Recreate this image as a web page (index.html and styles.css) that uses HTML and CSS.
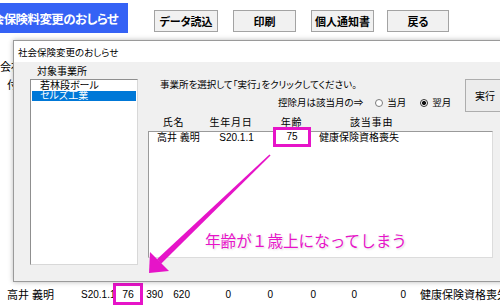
FILE: index.html
```html
<!DOCTYPE html>
<html lang="ja">
<head>
<meta charset="utf-8">
<title>社会保険料変更のおしらせ</title>
<link rel="stylesheet" href="styles.css">
</head>
<body>
<div class="page">
  <div class="toolbar">
    <div class="title-btn"><span>社会保険料変更のおしらせ</span></div>
    <button class="tb-btn b-load">データ読込</button>
    <button class="tb-btn b-print">印刷</button>
    <button class="tb-btn b-notice">個人通知書</button>
    <button class="tb-btn b-back">戻る</button>
  </div>
  <div class="bg-text bg1">会社</div>
  <div class="bg-text bg2">付</div>

  <div class="data-row">
    <span class="c-name">高井 義明</span>
    <span class="c-birth">S20.1.1</span>
    <span class="c-age">76</span>
    <span class="c-num">390</span>
    <span class="c-num">620</span>
    <span class="c-num">0</span>
    <span class="c-num">0</span>
    <span class="c-num">0</span>
    <span class="c-num">0</span>
    <span class="c-num">0</span>
    <span class="c-reason">健康保険資格喪失</span>
  </div>

  <div class="dialog">
    <div class="dlg-title">社会保険変更のおしらせ</div>
    <div class="dlg-body">
      <div class="left-col">
        <div class="lbl">対象事業所</div>
        <div class="listbox">
          <div class="item">若林段ボール</div>
          <div class="item selected">セルズ工業</div>
        </div>
      </div>
      <div class="right-col">
        <div class="top">
          <div class="msgs">
            <div class="msg">事業所を選択して「実行」をクリックしてください。</div>
            <div class="radios">
              <span>控除月は該当月の⇒</span>
              <span class="radio r1"></span><span class="rlabel">当月</span>
              <span class="radio r2 checked"></span><span class="rlabel">翌月</span>
            </div>
          </div>
          <button class="exec">実行</button>
        </div>
        <div class="heads">
          <span>氏名</span>
          <span>生年月日</span>
          <span>年齢</span>
          <span class="h-reason">該当事由</span>
        </div>
        <div class="results">
          <div class="row">
            <span class="r-name">高井 義明</span>
            <span class="r-birth">S20.1.1</span>
            <span class="r-age"><span class="mark">75</span></span>
            <span class="r-reason">健康保険資格喪失</span>
          </div>
        </div>
      </div>
    </div>
  </div>

  <svg class="arrow" width="500" height="308" viewBox="0 0 500 308" aria-hidden="true">
    <polygon points="269.45,154.42 270.55,155.58 161.08,263.67 156.92,259.33" fill="#e614c8"/>
    <polygon points="149,273 150,252 169,271" fill="#e614c8"/>
  </svg>
  <div class="note">年齢が１歳上になってしまう</div>
</div>
</body>
</html>
```

FILE: styles.css
```css
* { box-sizing: border-box; }
html, body { margin: 0; padding: 0; }
body {
  width: 500px;
  height: 308px;
  overflow: hidden;
  background: #fff;
  color: #000;
  font-family: "Liberation Sans", "Noto Sans CJK JP", sans-serif;
}
.page {
  position: relative;
  width: 500px;
  height: 308px;
  display: flex;
  flex-direction: column;
  overflow: hidden;
  font-feature-settings: "palt";
}

/* toolbar */
.toolbar {
  display: flex;
  align-items: flex-start;
  height: 33px;
  flex: none;
}
.title-btn {
  margin-top: 3px;
  width: 128px;
  height: 30px;
  background: #3562f5;
  color: #fff;
  font-family: "Noto Sans CJK JP", sans-serif;
  font-weight: 700;
  font-size: 12.5px;
  letter-spacing: -0.6px;
  display: flex;
  align-items: center;
  justify-content: flex-end;
  padding-right: 10px;
  overflow: hidden;
  white-space: nowrap;
}
.title-btn span { flex: none; }
.tb-btn {
  margin-top: 10px;
  height: 22px;
  padding: 0;
  background: #f1f1f1;
  border: 1px solid #a3a3a3;
  font-family: "Noto Sans CJK JP", sans-serif;
  font-feature-settings: "palt";
  font-weight: 700;
  font-size: 11px;
  color: #000;
  display: flex;
  align-items: center;
  justify-content: center;
}
.b-load { margin-left: 26px; width: 64px; }
.b-print { margin-left: 15px; width: 63px; }
.b-notice { margin-left: 15px; width: 63px; }
.b-back { margin-left: 13px; width: 62px; }

/* background page text */
.bg-text {
  font-family: "Noto Sans CJK JP", sans-serif;
  font-size: 11px;
  line-height: 13px;
  flex: none;
}
.bg1 { margin-top: 27px; }
.bg2 { margin-top: 5px; padding-left: 7px; }

/* bottom data row */
.data-row {
  margin-top: auto;
  margin-bottom: 3px;
  height: 22px;
  flex: none;
  display: grid;
  grid-template-columns: 74px 32px 30px 20px 27px 41px 42px 43px 41px 49px auto;
  align-items: center;
  padding-left: 7px;
  font-size: 10px;
  white-space: nowrap;
}
.c-name, .c-reason { font-size: 11px; }
.c-num { text-align: right; }
.c-reason { padding-left: 14px; }
.c-age {
  position: relative;
  height: 22px;
  border: 3px solid #e614c8;
  background: #fff;
  text-align: center;
  line-height: 16px;
  font-size: 10.5px;
}

/* dialog window */
.dialog {
  position: absolute;
  left: 13px;
  top: 40px;
  width: 530px;
  height: 242px;
  border: 1px solid #9a9a9a;
  background: #f0f0f0;
  box-shadow: 0 0 5px rgba(0, 0, 0, 0.28);
  display: flex;
  flex-direction: column;
  font-size: 9.5px;
}
.dlg-title {
  height: 21px;
  flex: none;
  background: #fff;
  padding-left: 4px;
  display: flex;
  align-items: center;
  font-family: "Noto Sans CJK JP", sans-serif;
  font-size: 9.5px;
}
.dlg-body {
  display: flex;
  gap: 10px;
  padding-left: 16px;
  flex: 1;
}
.left-col { width: 108px; flex: none; }
.lbl {
  margin-top: 4px;
  padding-left: 7px;
  line-height: 12px;
  font-size: 10px;
}
.listbox {
  margin-top: 1px;
  height: 186px;
  background: #fff;
  border: 1px solid;
  border-color: #8f8f8f #d8d8d8 #d8d8d8 #8f8f8f;
  padding: 1px;
}
.item {
  height: 10px;
  line-height: 10px;
  padding-left: 8px;
  font-size: 10px;
  white-space: nowrap;
}
.item.selected { background: #0078d7; color: #fff; }

.right-col {
  width: 382px;
  flex: none;
  padding-top: 17px;
}
.top { display: flex; height: 33px; }
.msgs { width: 317px; flex: none; }
.msg { line-height: 12px; padding-left: 12px; white-space: nowrap; }
.radios {
  margin-top: 6px;
  line-height: 12px;
  padding-left: 130px;
  display: flex;
  align-items: center;
  white-space: nowrap;
}
.radio {
  width: 8px;
  height: 8px;
  border-radius: 50%;
  border: 1px solid #7a7a7a;
  background: #fff;
  flex: none;
}
.r1 { margin-left: 12px; }
.r2 { margin-left: 14px; }
.radio.checked { background: radial-gradient(circle, #111 0 1.8px, #fff 2.3px); border-color: #333; }
.rlabel { margin-left: 4px; }
.exec {
  width: 40px;
  height: 33px;
  padding: 0;
  background: #ececec;
  border: 1px solid #adadad;
  font-family: "Noto Sans CJK JP", sans-serif;
  font-size: 10px;
  color: #000;
}
.heads {
  margin-top: 5px;
  line-height: 12px;
  display: grid;
  grid-template-columns: 51px 64px 57px auto;
  font-size: 10px;
  letter-spacing: 0.8px;
}
.heads span { text-align: center; }
.heads .h-reason { text-align: left; padding-left: 30px; }
.results {
  margin-top: 2px;
  width: 345px;
  height: 127px;
  background: #fff;
  border: 1px solid;
  border-color: #9a9a9a #dcdcdc #dcdcdc #9a9a9a;
}
.row {
  display: grid;
  grid-template-columns: 56px 63px 48px auto;
  line-height: 11px;
  font-size: 10px;
  white-space: nowrap;
}
.r-name { padding-left: 8px; }
.r-birth { text-align: center; }
.r-age { text-align: center; }
.r-reason { padding-left: 3px; }
.mark {
  position: relative;
  display: inline-block;
  width: 38px;
  height: 20px;
  margin-top: -5px;
  margin-bottom: -4px;
  border: 3px solid #e614c8;
  background: #fff;
  line-height: 14px;
  text-align: center;
  vertical-align: top;
}

/* annotation overlays */
.arrow {
  position: absolute;
  left: 0;
  top: 0;
}
.note {
  position: absolute;
  left: 205px;
  top: 230px;
  font-family: "Noto Sans CJK JP", sans-serif;
  font-feature-settings: normal;
  font-size: 15.6px;
  line-height: 20px;
  color: #e614c8;
  white-space: nowrap;
  text-shadow: 0 0 2px #fff, 0 0 3px #fff, 1px 1px 2px rgba(0, 0, 0, 0.18);
}
```
